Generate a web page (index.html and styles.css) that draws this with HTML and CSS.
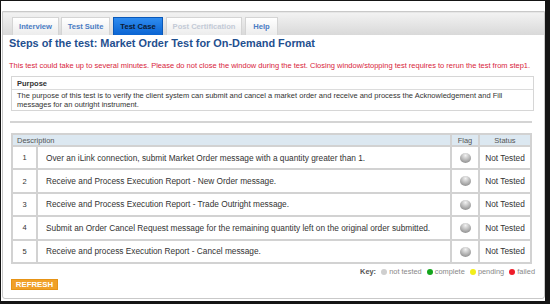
FILE: index.html
```html
<!DOCTYPE html>
<html lang="en">
<head>
    <meta charset="UTF-8">
    <title>Test Case</title>
    <link rel="stylesheet" href="styles.css">
</head>
<body>
    <div class="window">
        <div class="panel">
            <ul class="tabs">
                <li class="tab tab-interview">Interview</li>
                <li class="tab tab-suite">Test Suite</li>
                <li class="tab tab-case active">Test Case</li>
                <li class="tab tab-post disabled">Post Certification</li>
                <li class="tab tab-help">Help</li>
            </ul>

            <div class="content">
                <h1>Steps of the test: Market Order Test for On-Demand Format</h1>
                <p class="warning">This test could take up to several minutes. Please do not close the window during the test. Closing window/stopping test requires to rerun the test from step1.</p>

                <div class="purpose">
                    <div class="purpose-head">Purpose</div>
                    <div class="purpose-body">The purpose of this test is to verify the client system can submit and cancel a market order and receive and process the Acknowledgement and Fill messages for an outright instrument.</div>
                </div>

                <hr class="divider">

                <table class="steps">
                    <thead>
                        <tr>
                            <th colspan="2" class="th-desc">Description</th>
                            <th class="th-flag">Flag</th>
                            <th class="th-status">Status</th>
                        </tr>
                    </thead>
                    <tbody>
                        <tr>
                            <td class="num">1</td>
                            <td class="desc">Over an iLink connection, submit Market Order message with a quantity greater than 1.</td>
                            <td class="flag"><span class="ball"></span></td>
                            <td class="status">Not Tested</td>
                        </tr>
                        <tr>
                            <td class="num">2</td>
                            <td class="desc">Receive and Process Execution Report - New Order message.</td>
                            <td class="flag"><span class="ball"></span></td>
                            <td class="status">Not Tested</td>
                        </tr>
                        <tr>
                            <td class="num">3</td>
                            <td class="desc">Receive and Process Execution Report - Trade Outright message.</td>
                            <td class="flag"><span class="ball"></span></td>
                            <td class="status">Not Tested</td>
                        </tr>
                        <tr>
                            <td class="num">4</td>
                            <td class="desc">Submit an Order Cancel Request message for the remaining quantity left on the original order submitted.</td>
                            <td class="flag"><span class="ball"></span></td>
                            <td class="status">Not Tested</td>
                        </tr>
                        <tr>
                            <td class="num">5</td>
                            <td class="desc">Receive and process Execution Report - Cancel message.</td>
                            <td class="flag"><span class="ball"></span></td>
                            <td class="status">Not Tested</td>
                        </tr>
                    </tbody>
                </table>

                <div class="key">
                    <b>Key:</b>
                    <span class="dot gray"></span> not tested
                    <span class="dot green"></span> complete
                    <span class="dot yellow"></span> pending
                    <span class="dot red"></span> failed
                </div>

                <button class="refresh">REFRESH</button>
            </div>
        </div>
    </div>
</body>
</html>
```

FILE: styles.css
```css
* {
    margin: 0;
    padding: 0;
    box-sizing: border-box;
}

body {
    background-color: #151515;
    font-family: "Liberation Sans", Arial, sans-serif;
    color: #333;
}

.window {
    margin: 1px 5px 0 1px;
    height: 300px;
    background-color: #fff;
    padding-top: 10px;
}

.panel {
    margin-left: 1px;
    height: 288px;
    border: 1px solid #c9c9c9;
    border-radius: 0 0 3px 3px;
}

/* Abas */
.tabs {
    list-style: none;
    display: flex;
    align-items: flex-end;
    height: 23px;
    padding-left: 9px;
    background: linear-gradient(#f2f2f2, #d9d9d9);
    border-top: 1px solid #e6e6e6;
}

.tab {
    height: 18px;
    line-height: 18px;
    font-size: 7.6px;
    font-weight: bold;
    color: #4a7cc4;
    text-align: center;
    background: linear-gradient(#ffffff, #ececec);
    border: 1px solid #d4d4d4;
    border-bottom: none;
    margin-right: 2px;
}

.tab-interview { width: 47px; }
.tab-suite { width: 49px; margin-right: 3px; }
.tab-case { width: 50px; margin-right: 3px; }
.tab-post { width: 76px; margin-right: 3px; }
.tab-help { width: 33px; }

.tab.active {
    background: linear-gradient(#2f8cf0, #0a64d2);
    border-color: #0a58b8;
    color: #0b1a33;
}

.tab.disabled {
    color: #c3cad6;
}

/* Conteudo */
.content {
    padding: 0 7px 0 6px;
}

h1 {
    font-size: 10.9px;
    color: #1f4f8f;
    line-height: 16px;
}

.warning {
    color: #d8243c;
    font-size: 7.5px;
    margin-top: 10px;
    line-height: 9px;
}

.purpose {
    margin: 6px 3px 0 2px;
    border: 1px solid #d6d6d6;
    font-size: 7.5px;
}

.purpose-head {
    font-weight: bold;
    padding: 3px 5px 1px;
    border-bottom: 1px solid #dcdcdc;
    line-height: 8px;
}

.purpose-body {
    padding: 1px 5px 1px;
    line-height: 9px;
}

.divider {
    border: none;
    height: 2px;
    background-color: #d4d4d4;
    margin: 10px 5px 0 1px;
}

/* Tabela dos passos */
.steps {
    width: 521px;
    margin: 10px 0 0 2px;
    border-collapse: collapse;
    font-size: 8.3px;
    border: 2px solid #d2d2d2;
}

.steps th {
    background-color: #dce8f1;
    font-weight: normal;
    font-size: 7.5px;
    color: #555;
    height: 12px;
    border: 2px solid #d2d2d2;
}

.steps .th-desc {
    text-align: left;
    padding-left: 4px;
}

.steps td {
    height: 23.4px;
    border: 2px solid #d2d2d2;
    color: #333;
}

.steps .num {
    width: 25px;
    text-align: center;
    font-size: 7.5px;
}

.steps .desc {
    padding-left: 8px;
}

.steps .flag,
.steps .th-flag {
    width: 28px;
    text-align: center;
}

.steps .status,
.steps .th-status {
    width: 52px;
    text-align: center;
}

.ball {
    display: inline-block;
    width: 11px;
    height: 10px;
    border-radius: 50%;
    background: radial-gradient(circle at 50% 25%, #f2f2f2, #a4a4a4 65%, #7e7e7e);
    vertical-align: middle;
}

/* Legenda */
.key {
    text-align: right;
    font-size: 7.4px;
    color: #888;
    margin: 3px 2px 0 0;
    line-height: 10px;
}

.key b {
    color: #555;
}

.dot {
    display: inline-block;
    width: 6px;
    height: 6px;
    border-radius: 50%;
    vertical-align: -1px;
    margin-left: 3px;
}

.dot.gray { background-color: #cfcfcf; }
.dot.green { background-color: #13a51c; }
.dot.yellow { background-color: #f2ee1a; }
.dot.red { background-color: #ee1d2a; }

.refresh {
    display: block;
    margin: 2px 0 0 2px;
    background-color: #f0a028;
    border: 1px solid #e69316;
    color: #fff;
    font-family: "Liberation Sans", Arial, sans-serif;
    font-weight: bold;
    font-size: 7.8px;
    width: 47px;
    height: 11px;
    line-height: 9px;
    padding: 0;
}
```
